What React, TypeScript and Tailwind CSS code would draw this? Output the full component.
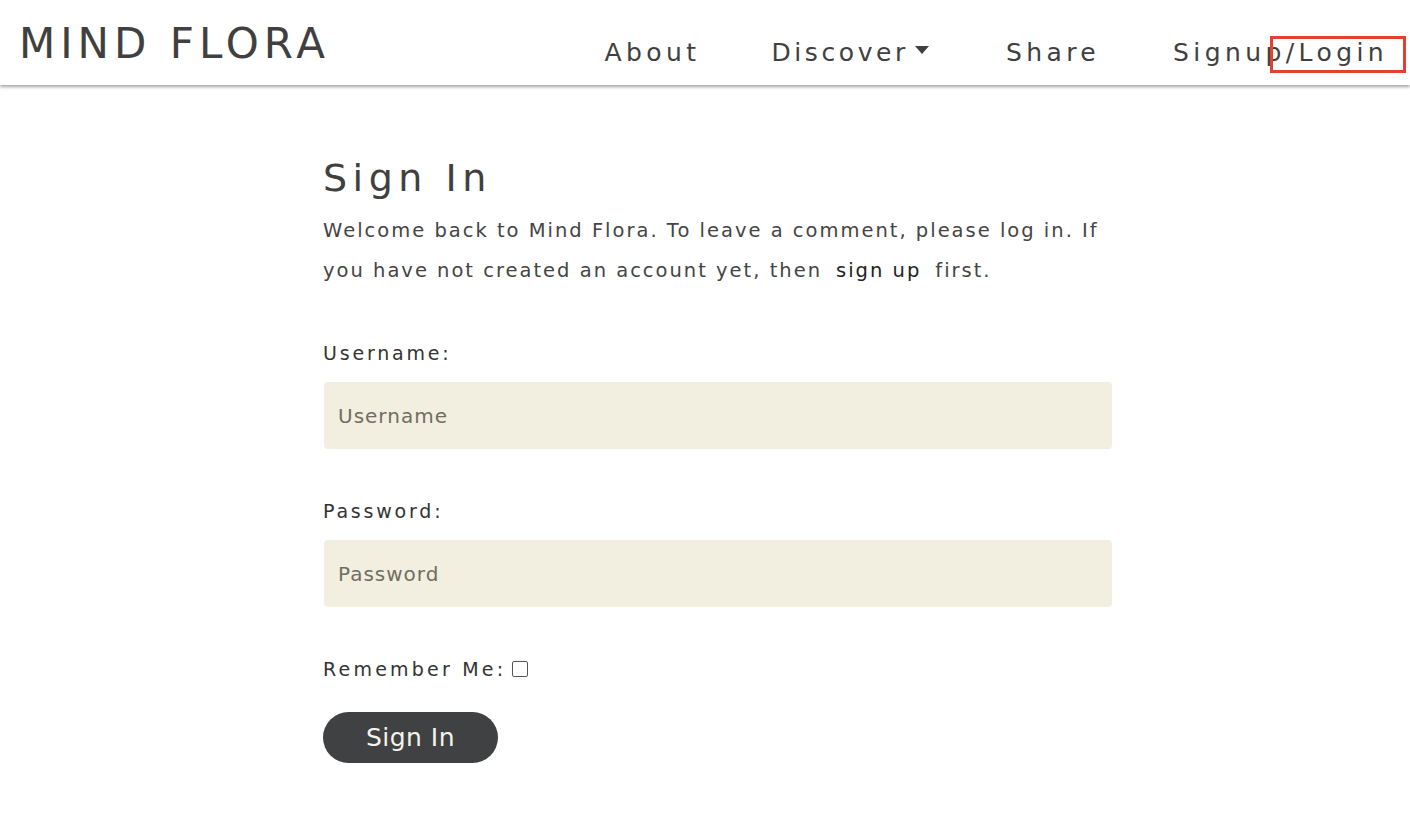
import React from "react";

const font = { fontFamily: '"DejaVu Sans", "Noto Sans", sans-serif' };

export default function App() {
  return (
    <div className="min-h-[814px] bg-white text-[#444]" style={font}>
      <header className="relative h-[85px] bg-white shadow-[0_2px_3px_rgba(0,0,0,0.35)] flex items-start">
        <div className="pl-[19px] pt-[14px] text-[42px] leading-[60px] tracking-[5px] text-[#404040] font-normal">
          MIND FLORA
        </div>
        <nav className="ml-auto flex items-center pt-[35px] text-[25px] leading-[36px] tracking-[4.4px] text-[#404040]">
          <span className="mr-[71px]">About</span>
          <span className="mr-[77px] flex items-center">
            <span className="tracking-[3.6px]">Discover</span>
            <span className="ml-[6px] inline-block w-0 h-0 border-l-[7px] border-r-[7px] border-t-[8px] border-l-transparent border-r-transparent border-t-[#404040] mb-[6px]"></span>
          </span>
          <span className="mr-[73px]">Share</span>
          <span className="mr-[22px]">Signup/Login</span>
        </nav>
        <span className="absolute left-[1270px] top-[36px] w-[136px] h-[37px] border-[3px] border-[#e2412b]"></span>
      </header>

      <main className="ml-[323px] w-[790px] pt-[70px]">
        <h1 className="text-[38px] leading-[46px] tracking-[5.5px] text-[#404040] font-normal">Sign In</h1>
        <p className="mt-[10px] text-[19.5px] leading-[40px] tracking-[2px] text-[#444]">
          <span className="block">Welcome back to Mind Flora. To leave a comment, please log in. If</span>
          <span className="block">
            you have not created an account yet, then
            <span className="ml-[14px] mr-[14px] text-[#222]">sign up</span>
            first.
          </span>
        </p>

        <form className="mt-[48px]">
          <label className="block text-[19px] leading-[28px] tracking-[2.8px] text-[#333]">Username:</label>
          <div className="mt-[15px] ml-[1px] h-[67px] w-[788px] rounded-[4px] bg-[#f2efe1] flex items-center pl-[14px] text-[20px] tracking-[1px] text-[#6f6e60]">
            Username
          </div>

          <label className="block mt-[48px] text-[19px] leading-[28px] tracking-[2.8px] text-[#333]">Password:</label>
          <div className="mt-[15px] ml-[1px] h-[67px] w-[788px] rounded-[4px] bg-[#f2efe1] flex items-center pl-[14px] text-[20px] tracking-[1px] text-[#6f6e60]">
            Password
          </div>

          <div className="mt-[48px] flex items-center text-[19px] leading-[28px] tracking-[3.2px] text-[#333]">
            Remember Me:
            <span className="ml-[6px] inline-block w-[16px] h-[16px] border border-[#555] rounded-[2px] bg-white"></span>
          </div>

          <button
            type="button"
            className="mt-[29px] h-[51px] w-[175px] rounded-full bg-[#404142] text-[#f5f3ea] text-[25px] tracking-[0.5px] flex items-center justify-center"
          >
            Sign In
          </button>
        </form>
      </main>
    </div>
  );
}
